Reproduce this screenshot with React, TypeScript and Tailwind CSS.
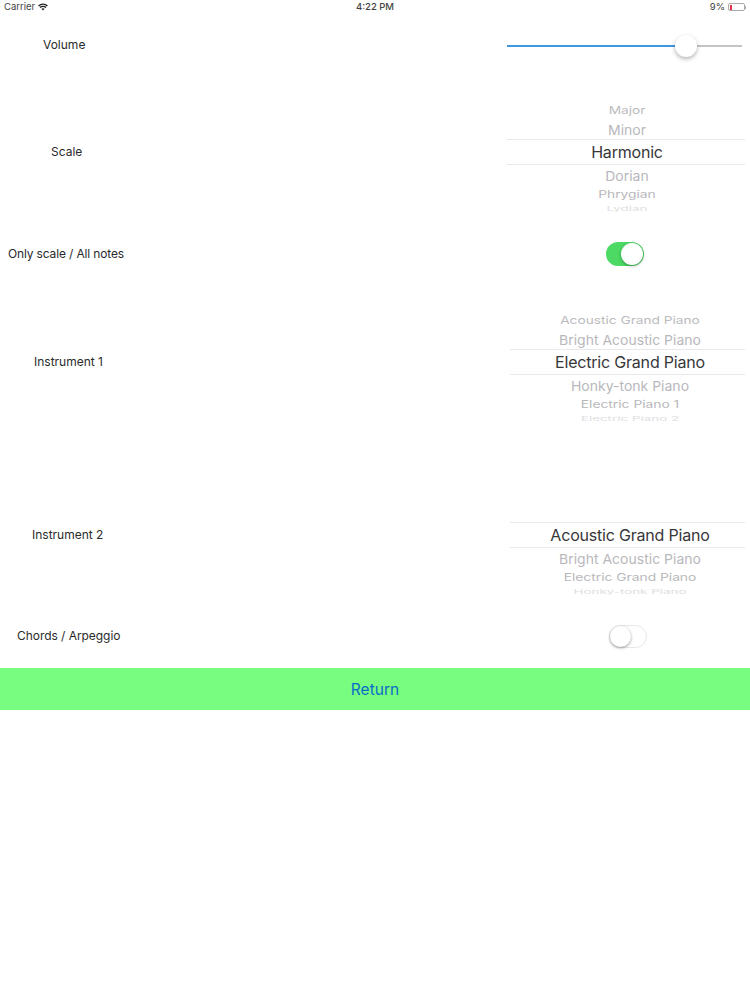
import { ReactNode } from "react";

const font = "font-['Inter','Liberation_Sans',sans-serif]";

// slot heights and squash copy the wheel's 3D look
const slots = [
  { box: "h-[20px]", text: "text-[13.7px] text-[#bcbcc0] scale-y-[0.8]" },
  { box: "h-[19px]", text: "text-[14px] text-[#b8b8bc] scale-y-[0.98]" },
  { box: "h-[26px] border-y border-[#e9e9ec]", text: "text-[16px] tracking-[-0.2px] text-[#37373a]" },
  { box: "h-[21px]", text: "text-[14px] text-[#b8b8bc] scale-y-[0.98]" },
  { box: "h-[17px]", text: "text-[13.8px] text-[#b8b8bc] scale-y-[0.76]" },
  { box: "h-[12px]", text: "text-[13.4px] text-[#dedee2] scale-y-[0.42]" },
];

function Picker({ items, className, shift }: { items: string[]; className: string; shift: string }) {
  return (
    <div className={`h-[115px] overflow-hidden ${className}`}>
      {items.map((item, i) => (
        <div key={i} className={`flex items-center justify-center whitespace-nowrap ${shift} ${slots[i].box}`}>
          <span className={`block ${slots[i].text}`}>{item}</span>
        </div>
      ))}
    </div>
  );
}

function Label({ children, className }: { children: ReactNode; className: string }) {
  return <div className={`text-[12px] leading-[18px] text-[#2a2a2a] whitespace-nowrap ${className}`}>{children}</div>;
}

function Toggle({ on }: { on: boolean }) {
  return on ? (
    <div className="flex h-[24px] w-[38px] items-center justify-end rounded-full bg-[#4cd964] pr-[1px]">
      <div className="h-[22px] w-[22px] rounded-full bg-white shadow-[0_1px_3px_rgba(0,0,0,0.35)]" />
    </div>
  ) : (
    <div className="flex h-[23px] w-[38px] items-center rounded-full border border-[#e8e8e8] bg-white">
      <div className="h-[21px] w-[21px] rounded-full bg-white shadow-[0_1px_3px_rgba(0,0,0,0.4)]" />
    </div>
  );
}

export default function App() {
  return (
    <div className={`h-[1000px] w-[750px] overflow-hidden bg-white ${font}`}>
      {/* Status bar */}
      <div className="grid h-[14px] grid-cols-3 items-center px-[4px] text-[9.5px] text-[#444]">
        <div className="flex items-center gap-[3px]">
          <span>Carrier</span>
          <svg width="10" height="8" viewBox="0 0 11 8" fill="none" stroke="#222" strokeWidth="1.6">
            <path d="M0.6 2.8 C3.4 0.2 7.6 0.2 10.4 2.8" />
            <path d="M2.2 4.5 C4 2.9 7 2.9 8.8 4.5" />
            <path d="M5.5 7.8 L3.7 6 C4.8 5.1 6.2 5.1 7.3 6 Z" fill="#222" stroke="none" />
          </svg>
        </div>
        <div className="text-center font-medium">4:22 PM</div>
        <div className="flex items-center justify-end gap-[3px]">
          <span>9%</span>
          <div className="flex h-[8px] w-[17px] items-center rounded-[2px] border border-[#aaa] px-[1px]">
            <div className="h-[5px] w-[2px] bg-[#e0304a]" />
          </div>
          <div className="-ml-[3px] h-[3px] w-[1px] bg-[#aaa]" />
        </div>
      </div>

      {/* Volume */}
      <div className="flex h-[86px] items-start justify-between">
        <Label className="ml-[43px] mt-[22px]">Volume</Label>
        <div className="mr-[8px] mt-[21px] flex h-[22px] w-[235px] items-center">
          <div className="h-[2px] w-[179px] bg-[#3f97e0]" />
          <div className="z-10 -mx-[11px] h-[22px] w-[22px] shrink-0 rounded-full bg-white shadow-[0_2px_4px_rgba(0,0,0,0.3)]" />
          <div className="h-[1.5px] flex-1 bg-[#c4c4c6]" />
        </div>
      </div>

      {/* Scale */}
      <div className="flex h-[120px] items-start justify-between">
        <Label className="ml-[51px] mt-[43px]">Scale</Label>
        <Picker className="w-[238px] mr-[5px]" shift="pl-[2px]" items={["Major", "Minor", "Harmonic", "Dorian", "Phrygian", "Lydian"]} />
      </div>

      {/* Only scale */}
      <div className="flex h-[90px] items-start">
        <Label className="ml-[8px] mt-[25px] w-[117px] tracking-[-0.15px]">Only scale / All notes</Label>
        <div className="ml-[481px] mt-[22px]">
          <Toggle on />
        </div>
      </div>

      {/* Instrument 1 */}
      <div className="flex h-[173px] items-start justify-between">
        <Label className="ml-[34px] mt-[43px]">Instrument 1</Label>
        <Picker
          className="w-[235px] mr-[5px]"
          shift="pl-[5px]"
          items={["Acoustic Grand Piano", "Bright Acoustic Piano", "Electric Grand Piano", "Honky-tonk Piano", "Electric Piano 1", "Electric Piano 2"]}
        />
      </div>

      {/* Instrument 2 */}
      <div className="flex h-[130px] items-start justify-between">
        <Label className="ml-[32px] mt-[43px]">Instrument 2</Label>
        <Picker
          className="w-[235px] mr-[5px]"
          shift="pl-[5px]"
          items={["", "", "Acoustic Grand Piano", "Bright Acoustic Piano", "Electric Grand Piano", "Honky-tonk Piano"]}
        />
      </div>

      {/* Chords */}
      <div className="flex h-[55px] items-start">
        <Label className="ml-[17px] mt-[14px] tracking-[-0.05px]">Chords / Arpeggio</Label>
        <div className="ml-[489px] mt-[12px]">
          <Toggle on={false} />
        </div>
      </div>

      <button className="block h-[42px] w-full bg-[#78fd80] pt-[1px] text-center text-[15.5px] text-[#0a6cc8]">Return</button>
    </div>
  );
}
